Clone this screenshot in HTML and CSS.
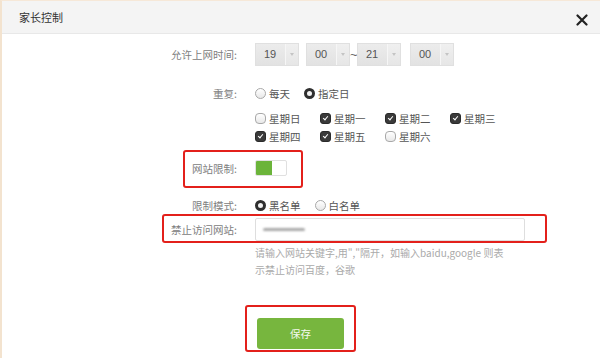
FILE: index.html
```html
<!DOCTYPE html>
<html lang="zh-CN">
<head>
    <meta charset="UTF-8">
    <meta name="viewport" content="width=device-width, initial-scale=1.0">
    <title>家长控制</title>
    <link rel="stylesheet" href="styles.css">
</head>
<body>

    <div class="dialog">
        <!-- HEADER -->
        <div class="header">
            <span class="title">家长控制</span>
            <svg class="close" width="12" height="12" viewBox="0 0 12 12">
                <path d="M1.5 1.5 L10.5 10.5 M10.5 1.5 L1.5 10.5" stroke="#222" stroke-width="2.2" stroke-linecap="round"/>
            </svg>
        </div>

        <!-- FORM -->
        <div class="form">
            <div class="row row-time">
                <label>允许上网时间:</label>
                <div class="time-group">
                    <div class="sel"><span>19</span><i></i></div>
                    <div class="sel"><span>00</span><i></i></div>
                    <span class="tilde">~</span>
                    <div class="sel"><span>21</span><i></i></div>
                    <div class="sel sel-last"><span>00</span><i></i></div>
                </div>
            </div>

            <div class="row row-repeat">
                <label>重复:</label>
                <div class="opts">
                    <span class="opt"><b class="radio"></b>每天</span>
                    <span class="opt"><b class="radio on"></b>指定日</span>
                </div>
            </div>

            <div class="row">
                <label></label>
                <div class="days">
                    <span class="opt"><b class="check"></b>星期日</span>
                    <span class="opt"><b class="check on"></b>星期一</span>
                    <span class="opt"><b class="check on"></b>星期二</span>
                    <span class="opt"><b class="check on"></b>星期三</span>
                    <span class="opt"><b class="check on"></b>星期四</span>
                    <span class="opt"><b class="check on"></b>星期五</span>
                    <span class="opt"><b class="check"></b>星期六</span>
                </div>
            </div>

            <div class="row row-switch">
                <label>网站限制:</label>
                <div class="switch"><i></i></div>
            </div>

            <div class="row row-mode">
                <label>限制模式:</label>
                <div class="opts">
                    <span class="opt"><b class="radio on"></b>黑名单</span>
                    <span class="opt"><b class="radio"></b>白名单</span>
                </div>
            </div>

            <div class="row row-site">
                <label>禁止访问网站:</label>
                <div class="input"><span class="blurred"></span></div>
            </div>

            <div class="row row-hint">
                <label></label>
                <p class="hint">请输入网站关键字,用","隔开，如输入baidu,google 则表<br>示禁止访问百度，谷歌</p>
            </div>

            <div class="row row-save">
                <label></label>
                <div><button class="save">保存</button></div>
            </div>
        </div>

        <!-- red annotation frames -->
        <div class="mark mark-switch"></div>
        <div class="mark mark-site"></div>
        <div class="mark mark-save"></div>
    </div>

</body>
</html>
```

FILE: styles.css
```css
* { margin: 0; padding: 0; box-sizing: border-box; }
body {
    background: #fff;
    font-family: "Noto Sans CJK SC", "Noto Sans", sans-serif;
    color: #555;
    width: 600px;
    height: 358px;
    overflow: hidden;
}

.dialog {
    position: relative;
    height: 358px;
    border-top: 1px solid #f6e8d8;
    border-left: 2px solid #f3e3cf;
}

.header {
    height: 33px;
    background: #f4f4f4;
    border-bottom: 1px solid #e8e8e8;
    display: flex;
    align-items: center;
    justify-content: space-between;
    padding: 0 12px 0 17px;
}

.title {
    font-size: 11px;
    color: #333;
}

.close { margin-top: 6px; }

/* rows */
.row {
    display: grid;
    grid-template-columns: 235px 1fr;
    column-gap: 18px;
    align-items: center;
}

.row label {
    font-size: 10.5px;
    color: #808080;
    text-align: right;
}

.row-time { margin-top: 9px; height: 23px; }
.row-repeat { margin-top: 19px; height: 16px; }
.row-switch { margin-top: 16px; height: 16px; }
.row-mode { margin-top: 21px; height: 16px; }
.row-site { margin-top: 5px; height: 23px; }
.row-hint { margin-top: 3px; }
.row-save { margin-top: 40px; }

/* time selects */
.time-group { display: flex; align-items: center; }

.sel {
    width: 44px;
    height: 23px;
    display: flex;
    background: linear-gradient(#ececec, #e2e2e2);
    border: 1px solid #e0e0e0;
    font-family: "Liberation Sans", Arial, sans-serif;
    font-size: 11px;
    color: #555;
}
.sel + .sel { margin-left: 7px; }
.sel span { flex: 1; padding-left: 8px; line-height: 21px; }
.sel i {
    width: 13px;
    border-left: 1px solid #f6f6f6;
    background: linear-gradient(#f0f0f0, #e6e6e6);
    position: relative;
}
.sel i::after {
    content: "";
    position: absolute;
    left: 4px;
    top: 9px;
    border-left: 2.5px solid transparent;
    border-right: 2.5px solid transparent;
    border-top: 3px solid #c4c4c4;
}
.tilde {
    width: 7px;
    font-family: "Liberation Sans", Arial, sans-serif;
    font-size: 13px;
    color: #666;
}
.sel-last { margin-left: 9px; }
.sel + .sel-last { margin-left: 9px; }

/* radios / checkboxes */
.opts { display: flex; gap: 14px; }

.opt {
    display: inline-flex;
    align-items: center;
    gap: 3px;
    font-size: 10.5px;
    color: #555;
    white-space: nowrap;
}

.radio {
    width: 11px;
    height: 11px;
    border-radius: 50%;
    border: 1px solid #a8a8a8;
    background: linear-gradient(#fff, #e8e8e8);
}
.radio.on {
    border: 3.5px solid #2f2f2f;
    background: #f2f2f2;
}

.days {
    display: grid;
    grid-template-columns: repeat(4, 65px);
    row-gap: 2px;
    margin-top: 9px;
}
.days .opt { height: 16px; }

.check {
    width: 11px;
    height: 11px;
    border-radius: 4px;
    border: 1px solid #a8a8a8;
    background: linear-gradient(#fff, #e8e8e8);
    position: relative;
}
.check.on {
    border-radius: 3px;
    background: #3a3a3a;
    border-color: #2a2a2a;
}
.check.on::after {
    content: "";
    position: absolute;
    left: 2px;
    top: 2px;
    width: 4px;
    height: 2px;
    border-left: 1.3px solid #fff;
    border-bottom: 1.3px solid #fff;
    transform: rotate(-50deg);
}

/* switch */
.switch {
    width: 32px;
    height: 16px;
    border: 1px solid #e0e0e0;
    border-radius: 2px;
    background: #fff;
    display: flex;
}
.switch i {
    width: 16px;
    background: #6bb43a;
    border-radius: 1px 0 0 1px;
}

/* input */
.input {
    width: 270px;
    height: 23px;
    border: 1px solid #dedede;
    border-radius: 2px;
    background: #fff;
    display: flex;
    align-items: center;
    padding-left: 7px;
}
.blurred {
    width: 42px;
    height: 3px;
    border-radius: 2px;
    background: #a9a9a9;
    filter: blur(1.2px);
}

.hint {
    font-size: 10px;
    line-height: 17px;
    color: #aaa;
}

.save {
    width: 87px;
    height: 31px;
    margin-left: 2px;
    border: none;
    border-radius: 3px;
    background: #77b63e;
    color: #f4f9ee;
    font-family: "Noto Sans CJK SC", sans-serif;
    font-size: 10.5px;
}

/* annotation frames */
.mark {
    position: absolute;
    border: 2px solid #e3201b;
    border-radius: 3px;
}
.mark-switch { left: 181px; top: 149px; width: 120px; height: 38px; }
.mark-site { left: 160px; top: 213px; width: 385px; height: 29px; }
.mark-save { left: 243px; top: 304px; width: 111px; height: 47px; }
```
